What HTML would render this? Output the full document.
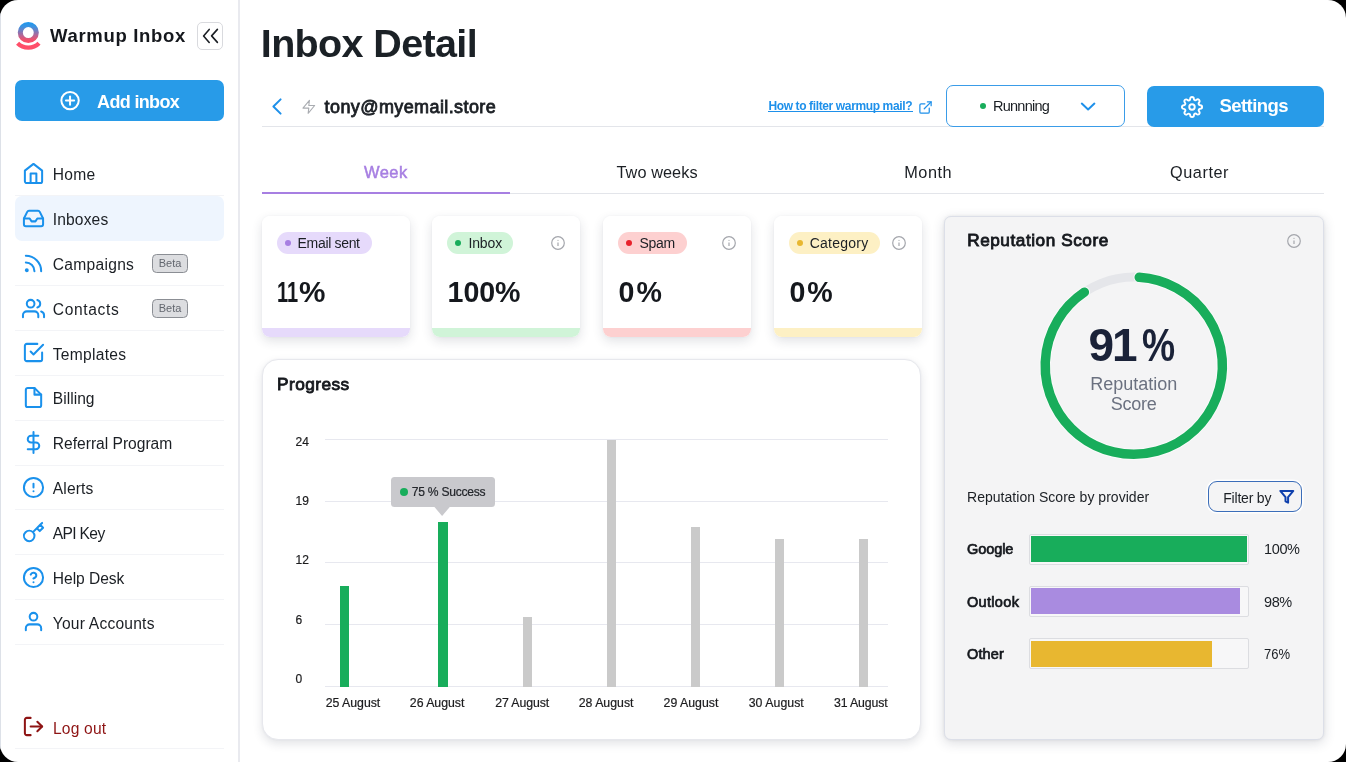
<!DOCTYPE html>
<html lang="en">
<head>
<meta charset="utf-8">
<title>Inbox Detail</title>
<style>
*{box-sizing:border-box;margin:0;padding:0}
html,body{width:1346px;height:762px;overflow:hidden;background:#000}
body{font-family:"Liberation Sans",sans-serif;color:#1b1f24}
#app{will-change:transform;position:absolute;left:0;top:0;width:1346px;height:762px;background:#fff;border-radius:18px;overflow:hidden}
.abs{position:absolute}
.t{position:absolute;white-space:nowrap;line-height:1}
svg{position:absolute;overflow:visible}
/* sidebar */
#edge{left:0;top:0;width:1.2px;height:762px;background:#dde1e8}
#side{left:0;top:0;width:240px;height:762px;border-right:2px solid #e9eaef}
.sep{position:absolute;left:15px;width:209px;height:1px;background:#f3f4f7}
.nav{font-size:16px;color:#1b1f24;left:52px}
.ic{stroke:#1a91ec;fill:none;stroke-width:2.1;stroke-linecap:round;stroke-linejoin:round}
.beta{position:absolute;left:152px;width:36px;height:19px;border:1.4px solid #8b8e94;border-radius:4.5px;background:#dcdde0;font-size:11px;color:#62666e;text-align:center;line-height:16.4px}
/* main */
.hr{position:absolute;height:1px;background:#e3e5ea}
.tab{font-size:16px;color:#1b1f24;letter-spacing:.3px}
.card{position:absolute;top:216px;width:148px;height:121px;background:#fff;border-radius:8px;overflow:hidden}
.cardsh{position:absolute;top:216px;width:148px;height:121px;border-radius:8px;box-shadow:0 4px 11px rgba(40,50,70,.14),0 0 2px rgba(40,50,70,.05)}
.band{position:absolute;left:0;bottom:0;width:100%;height:9.3px}
.pill{position:absolute;left:15px;top:16px;height:22px;border-radius:11px}
.pill i{position:absolute;left:7px;top:8px;width:6px;height:6px;border-radius:50%}
.pill span{position:absolute;left:20px;top:4px;font-size:14px;line-height:1;color:#1b1f24;white-space:nowrap}
.val{position:absolute;left:15px;top:62px;font-size:28px;font-weight:bold;line-height:1;color:#15181d;white-space:nowrap}
.info{stroke:#a4a6ac;fill:none;stroke-width:1.2}
</style>
</head>
<body>
<div id="app">

<!-- ============ SIDEBAR ============ -->
<div id="side" class="abs"></div>
<div id="edge" class="abs"></div>
<svg style="left:14px;top:18px" width="30" height="36" viewBox="14 18 30 36">
<defs><linearGradient id="lg" x1="0" y1="22" x2="0" y2="43" gradientUnits="userSpaceOnUse"><stop offset="0" stop-color="#1a98ee"/><stop offset=".22" stop-color="#3a93e2"/><stop offset=".55" stop-color="#9b6ea6"/><stop offset=".85" stop-color="#f2506c"/><stop offset="1" stop-color="#ff4d66"/></linearGradient></defs>
<circle cx="28.3" cy="32.55" r="8.0" fill="none" stroke="url(#lg)" stroke-width="5.1"/>
<path d="M17.6 43.2 A15.1 15.1 0 0 0 39.0 43.2" fill="none" stroke="#ff4f69" stroke-width="4.4"/>
</svg>
<div class="t" style="left:50.1px;top:26.8px;font-size:18.5px;font-weight:bold;color:#15181d;letter-spacing:0.67px;">Warmup Inbox</div>
<div class="abs" style="left:197px;top:22px;width:26px;height:28px;border:1px solid #d9dade;border-radius:5px;background:#fff"></div>
<svg style="left:197px;top:22px" width="26" height="28" viewBox="197 22 26 28" fill="none" stroke="#1b1f24" stroke-width="1.6" stroke-linecap="round" stroke-linejoin="round"><polyline points="209.2,29.4 203.6,35.9 209.2,42.4"/><polyline points="217.4,29.4 211.6,35.9 217.4,42.4"/></svg>
<div class="abs" style="left:15px;top:80px;width:209px;height:41px;border-radius:7px;background:#289be8"></div>
<svg style="left:59px;top:90px" width="22" height="22" viewBox="0 0 22 22" fill="none" stroke="#fff" stroke-width="2" stroke-linecap="round"><circle cx="11.05" cy="10.6" r="8.7"/><line x1="11.05" y1="6.5" x2="11.05" y2="14.7"/><line x1="6.95" y1="10.6" x2="15.15" y2="10.6"/></svg>
<div class="t" style="left:97.1px;top:92.5px;font-size:18px;font-weight:bold;color:#fff;letter-spacing:-0.66px;">Add inbox</div>
<div class="abs" style="left:15px;top:195.5px;width:209px;height:45px;border-radius:7px;background:#eef5fe"></div>
<svg class="ic" style="left:22.0px;top:161.9px;" width="23" height="23" viewBox="0 0 24 24"><path d="M3 9l9-7 9 7v11a2 2 0 0 1-2 2H5a2 2 0 0 1-2-2z"/><polyline points="9 22 9 12 15 12 15 22"/></svg>
<div class="t" style="left:52.8px;top:167.2px;font-size:15.6px;letter-spacing:0.30px;">Home</div>
<svg class="ic" style="left:22.0px;top:206.8px;" width="23" height="23" viewBox="0 0 24 24"><polyline points="22 12 16 12 14 15 10 15 8 12 2 12"/><path d="M5.45 5.11L2 12v6a2 2 0 0 0 2 2h16a2 2 0 0 0 2-2v-6l-3.45-6.89A2 2 0 0 0 16.76 4H7.24a2 2 0 0 0-1.79 1.11z"/></svg>
<div class="t" style="left:52.8px;top:212.0px;font-size:15.6px;letter-spacing:0.13px;">Inboxes</div>
<svg class="ic" style="left:22.0px;top:251.6px;" width="23" height="23" viewBox="0 0 24 24"><path d="M4 11a9 9 0 0 1 9 9"/><path d="M4 4a16 16 0 0 1 16 16"/><circle cx="5" cy="19" r="1"/></svg>
<div class="t" style="left:52.8px;top:256.9px;font-size:15.6px;letter-spacing:0.28px;">Campaigns</div>
<div class="beta" style="top:253.9px">Beta</div>
<div class="sep" style="top:285.1px"></div>
<svg class="ic" style="left:22.0px;top:296.5px;" width="23" height="23" viewBox="0 0 24 24"><path d="M17 21v-2a4 4 0 0 0-4-4H5a4 4 0 0 0-4 4v2"/><circle cx="9" cy="7" r="4"/><path d="M23 21v-2a4 4 0 0 0-3-3.87"/><path d="M16 3.13a4 4 0 0 1 0 7.75"/></svg>
<div class="t" style="left:52.8px;top:301.8px;font-size:15.6px;letter-spacing:0.62px;">Contacts</div>
<div class="beta" style="top:298.8px">Beta</div>
<div class="sep" style="top:330.0px"></div>
<svg class="ic" style="left:22.0px;top:341.3px;" width="23" height="23" viewBox="0 0 24 24"><polyline points="9 11 12 14 22 4"/><path d="M21 12v7a2 2 0 0 1-2 2H5a2 2 0 0 1-2-2V5a2 2 0 0 1 2-2h11"/></svg>
<div class="t" style="left:52.8px;top:346.6px;font-size:15.6px;letter-spacing:0.27px;">Templates</div>
<div class="sep" style="top:374.8px"></div>
<svg class="ic" style="left:22.0px;top:386.1px;" width="23" height="23" viewBox="0 0 24 24"><path d="M13 2H6a2 2 0 0 0-2 2v16a2 2 0 0 0 2 2h12a2 2 0 0 0 2-2V9z"/><polyline points="13 2 13 9 20 9"/></svg>
<div class="t" style="left:52.8px;top:391.4px;font-size:15.6px;letter-spacing:0.02px;">Billing</div>
<div class="sep" style="top:419.6px"></div>
<svg class="ic" style="left:22.0px;top:431.0px;" width="23" height="23" viewBox="0 0 24 24"><line x1="12" y1="1" x2="12" y2="23"/><path d="M17 5H9.5a3.5 3.5 0 0 0 0 7h5a3.5 3.5 0 0 1 0 7H6"/></svg>
<div class="t" style="left:52.8px;top:436.3px;font-size:15.6px;letter-spacing:-0.01px;">Referral Program</div>
<div class="sep" style="top:464.5px"></div>
<svg class="ic" style="left:22.0px;top:475.9px;" width="23" height="23" viewBox="0 0 24 24"><circle cx="12" cy="12" r="10"/><line x1="12" y1="8" x2="12" y2="12"/><line x1="12" y1="16" x2="12.01" y2="16"/></svg>
<div class="t" style="left:52.8px;top:481.2px;font-size:15.6px;letter-spacing:0.11px;">Alerts</div>
<div class="sep" style="top:509.4px"></div>
<svg class="ic" style="left:22.0px;top:520.7px;" width="23" height="23" viewBox="0 0 24 24"><path d="M21 2l-2 2m-7.61 7.61a5.5 5.5 0 1 1-7.778 7.778 5.5 5.5 0 0 1 7.777-7.777zm0 0L15.5 7.5m0 0l3 3L22 7l-3-3m-3.5 3.5L19 4"/></svg>
<div class="t" style="left:52.8px;top:526.0px;font-size:15.6px;letter-spacing:-0.66px;">API Key</div>
<div class="sep" style="top:554.2px"></div>
<svg class="ic" style="left:22.0px;top:565.6px;" width="23" height="23" viewBox="0 0 24 24"><circle cx="12" cy="12" r="10"/><path d="M9.09 9a3 3 0 0 1 5.83 1c0 2-3 3-3 3"/><line x1="12" y1="17" x2="12.01" y2="17"/></svg>
<div class="t" style="left:52.8px;top:570.9px;font-size:15.6px;letter-spacing:-0.05px;">Help Desk</div>
<div class="sep" style="top:599.1px"></div>
<svg class="ic" style="left:22.0px;top:610.4px;" width="23" height="23" viewBox="0 0 24 24"><path d="M20 21v-2a4 4 0 0 0-4-4H8a4 4 0 0 0-4 4v2"/><circle cx="12" cy="7" r="4"/></svg>
<div class="t" style="left:52.8px;top:615.7px;font-size:15.6px;letter-spacing:0.21px;">Your Accounts</div>
<div class="sep" style="top:643.9px"></div>
<div class="sep" style="top:195px"></div>
<svg class="ic" style="left:22.0px;top:715.3px;stroke:#8e1414" width="23" height="23" viewBox="0 0 24 24"><path d="M9 21H5a2 2 0 0 1-2-2V5a2 2 0 0 1 2-2h4"/><polyline points="16 17 21 12 16 7"/><line x1="21" y1="12" x2="9" y2="12"/></svg>
<div class="t" style="left:52.9px;top:720.6px;font-size:15.6px;color:#8e1414;letter-spacing:0.21px;">Log out</div>
<div class="sep" style="top:748px"></div>

<!-- ============ MAIN ============ -->
<div class="t" style="left:260.8px;top:23.8px;font-size:39.5px;font-weight:bold;color:#1b2126;letter-spacing:-0.64px;">Inbox Detail</div>
<svg style="left:268px;top:94px" width="20" height="24" viewBox="268 94 20 24" fill="none" stroke="#1e90ea" stroke-width="2" stroke-linecap="round" stroke-linejoin="round"><polyline points="280.6,99.4 273.4,106.5 280.6,113.6"/></svg>
<svg style="left:301.3px;top:98.7px" width="15.6" height="15.6" viewBox="0 0 24 24" fill="none" stroke="#a9acb1" stroke-width="1.7" stroke-linejoin="round"><polygon points="13 2 3 14 12 14 11 22 21 10 12 10 13 2"/></svg>
<div class="t" style="left:324.6px;top:97.6px;font-size:18px;letter-spacing:0.40px;-webkit-text-stroke:.8px #1b1f24;">tony@myemail.store</div>
<div class="hr" style="left:262px;top:125.5px;width:1062px"></div>
<div class="t" style="left:768.4px;top:100.0px;font-size:12px;font-weight:bold;color:#1e90ea;letter-spacing:-0.37px;">How to filter warmup mail?</div>
<div class="abs" style="left:768px;top:111.3px;width:145px;height:1px;background:#1e90ea"></div>
<svg style="left:917.5px;top:99.5px" width="15" height="15" viewBox="0 0 24 24" fill="none" stroke="#1e90ea" stroke-width="2" stroke-linecap="round" stroke-linejoin="round"><path d="M18 13v6a2 2 0 0 1-2 2H5a2 2 0 0 1-2-2V8a2 2 0 0 1 2-2h6"/><polyline points="15 3 21 3 21 9"/><line x1="10" y1="14" x2="21" y2="3"/></svg>
<div class="abs" style="left:946px;top:85px;width:178.5px;height:42px;border:1.5px solid #3a9ce8;border-radius:7px;background:#fff"></div>
<div class="abs" style="left:980.1px;top:103.0px;width:6px;height:6px;border-radius:50%;background:#18ad5b"></div>
<div class="t" style="left:993.0px;top:99.3px;font-size:14.5px;letter-spacing:-0.75px;">Runnning</div>
<svg style="left:1076px;top:98px" width="24" height="16" viewBox="1076 98 24 16" fill="none" stroke="#1e90ea" stroke-width="2" stroke-linecap="round" stroke-linejoin="round"><polyline points="1081.8,103.6 1088.1,109.4 1094.4,103.6"/></svg>
<div class="abs" style="left:1146.5px;top:85.5px;width:177px;height:41px;border-radius:7px;background:#289be8"></div>
<svg style="left:1181px;top:95.6px" width="22" height="22" viewBox="0 0 24 24" fill="none" stroke="#fff" stroke-width="2.1" stroke-linecap="round" stroke-linejoin="round"><circle cx="12" cy="12" r="3"/><path d="M19.4 15a1.65 1.65 0 0 0 .33 1.82l.06.06a2 2 0 0 1 0 2.83 2 2 0 0 1-2.83 0l-.06-.06a1.65 1.65 0 0 0-1.82-.33 1.65 1.65 0 0 0-1 1.51V21a2 2 0 0 1-2 2 2 2 0 0 1-2-2v-.09A1.65 1.65 0 0 0 9 19.4a1.65 1.65 0 0 0-1.82.33l-.06.06a2 2 0 0 1-2.83 0 2 2 0 0 1 0-2.83l.06-.06a1.65 1.65 0 0 0 .33-1.82 1.65 1.65 0 0 0-1.51-1H3a2 2 0 0 1-2-2 2 2 0 0 1 2-2h.09A1.65 1.65 0 0 0 4.6 9a1.65 1.65 0 0 0-.33-1.82l-.06-.06a2 2 0 0 1 0-2.83 2 2 0 0 1 2.83 0l.06.06a1.65 1.65 0 0 0 1.82.33H9a1.65 1.65 0 0 0 1-1.51V3a2 2 0 0 1 2-2 2 2 0 0 1 2 2v.09a1.65 1.65 0 0 0 1 1.51 1.65 1.65 0 0 0 1.82-.33l.06-.06a2 2 0 0 1 2.83 0 2 2 0 0 1 0 2.83l-.06.06a1.65 1.65 0 0 0-.33 1.82V9a1.65 1.65 0 0 0 1.51 1H21a2 2 0 0 1 2 2 2 2 0 0 1-2 2h-.09a1.65 1.65 0 0 0-1.51 1z"/></svg>
<div class="t" style="left:1219.5px;top:97.2px;font-size:18.5px;font-weight:bold;color:#fff;letter-spacing:-0.58px;">Settings</div>
<div class="hr" style="left:262px;top:192.6px;width:1062px"></div>
<div class="abs" style="left:262px;top:192.0px;width:248.2px;height:1.8px;background:#a77fe2"></div>
<div class="t" style="left:364.0px;top:164.3px;font-size:16.5px;color:#a77fe2;letter-spacing:0.44px;-webkit-text-stroke:.5px #a77fe2;">Week</div>
<div class="t" style="left:616.5px;top:164.2px;font-size:16.3px;letter-spacing:0.07px;">Two weeks</div>
<div class="t" style="left:904.3px;top:164.3px;font-size:16.3px;letter-spacing:0.51px;">Month</div>
<div class="t" style="left:1170.0px;top:164.3px;font-size:16.3px;letter-spacing:0.55px;">Quarter</div>

<div class="cardsh" style="left:261.8px"></div>
<div class="card" style="left:261.8px"><div class="band" style="background:#e6dafb"></div></div>
<div class="abs" style="left:276.9px;top:231.5px;width:94.8px;height:22.2px;border-radius:11.1px;background:#e6dafb"></div>
<div class="abs" style="left:284.6px;top:239.6px;width:6.2px;height:6.2px;border-radius:50%;background:#a77fe2"></div>
<div class="t" style="left:297.6px;top:236.3px;font-size:14px;letter-spacing:-0.33px;">Email sent</div>
<div class="t" style="left:277.0px;top:277.6px;font-size:28.6px;font-weight:bold;color:#15181d;transform:scaleX(.7);transform-origin:0 50%;">11</div>
<div class="t" style="left:299.0px;top:277.6px;font-size:28.6px;font-weight:bold;color:#15181d;transform:scaleX(1.04);transform-origin:0 50%;">%</div>
<div class="cardsh" style="left:432.2px"></div>
<div class="card" style="left:432.2px"><div class="band" style="background:#d0f4d8"></div></div>
<div class="abs" style="left:447.3px;top:231.5px;width:66.1px;height:22.2px;border-radius:11.1px;background:#d0f4d8"></div>
<div class="abs" style="left:455.0px;top:239.6px;width:6.2px;height:6.2px;border-radius:50%;background:#18ad5b"></div>
<div class="t" style="left:468.4px;top:236.3px;font-size:14px;letter-spacing:-0.11px;">Inbox</div>
<div class="t" style="left:447.6px;top:277.6px;font-size:28.6px;font-weight:bold;color:#15181d;letter-spacing:-0.11px;">100%</div>
<svg class="info" style="left:550.4px;top:234.7px" width="16" height="16" viewBox="-8 -8 16 16"><circle cx="0" cy="0" r="6.3"/><line x1="0" y1="-0.6" x2="0" y2="3.1"/><circle cx="0" cy="-2.6" r=".55" fill="#a9abb0" stroke="none"/></svg>
<div class="cardsh" style="left:603.0px"></div>
<div class="card" style="left:603.0px"><div class="band" style="background:#fdd0d0"></div></div>
<div class="abs" style="left:618.1px;top:231.5px;width:68.6px;height:22.2px;border-radius:11.1px;background:#fdd0d0"></div>
<div class="abs" style="left:625.8px;top:239.6px;width:6.2px;height:6.2px;border-radius:50%;background:#e8222c"></div>
<div class="t" style="left:639.4px;top:236.3px;font-size:14px;letter-spacing:-0.23px;">Spam</div>
<div class="t" style="left:618.6px;top:277.6px;font-size:28.6px;font-weight:bold;color:#15181d;letter-spacing:2.07px;">0%</div>
<svg class="info" style="left:720.8px;top:234.7px" width="16" height="16" viewBox="-8 -8 16 16"><circle cx="0" cy="0" r="6.3"/><line x1="0" y1="-0.6" x2="0" y2="3.1"/><circle cx="0" cy="-2.6" r=".55" fill="#a9abb0" stroke="none"/></svg>
<div class="cardsh" style="left:773.7px"></div>
<div class="card" style="left:773.7px"><div class="band" style="background:#fdf0c4"></div></div>
<div class="abs" style="left:788.8px;top:231.5px;width:91.1px;height:22.2px;border-radius:11.1px;background:#fdf0c4"></div>
<div class="abs" style="left:796.5px;top:239.6px;width:6.2px;height:6.2px;border-radius:50%;background:#e8b730"></div>
<div class="t" style="left:809.7px;top:236.3px;font-size:14px;letter-spacing:0.24px;">Category</div>
<div class="t" style="left:789.4px;top:277.6px;font-size:28.6px;font-weight:bold;color:#15181d;letter-spacing:1.87px;">0%</div>
<svg class="info" style="left:891.4px;top:234.7px" width="16" height="16" viewBox="-8 -8 16 16"><circle cx="0" cy="0" r="6.3"/><line x1="0" y1="-0.6" x2="0" y2="3.1"/><circle cx="0" cy="-2.6" r=".55" fill="#a9abb0" stroke="none"/></svg>

<div class="abs" style="left:262px;top:359px;width:659px;height:380.5px;border-radius:16px;background:#fff;border:1px solid #e7e8ed;box-shadow:0 4px 10px rgba(40,50,70,.13),0 0 2px rgba(40,50,70,.05)"></div>
<div class="t" style="left:277.0px;top:376.4px;font-size:17.3px;color:#15181d;letter-spacing:0.43px;-webkit-text-stroke:.85px #15181d;">Progress</div>
<div class="abs" style="left:325px;top:438.8px;width:563px;height:1px;background:#e7e8ef"></div>
<div class="abs" style="left:325px;top:500.6px;width:563px;height:1px;background:#e7e8ef"></div>
<div class="abs" style="left:325px;top:562.3px;width:563px;height:1px;background:#e7e8ef"></div>
<div class="abs" style="left:325px;top:624.1px;width:563px;height:1px;background:#e7e8ef"></div>
<div class="abs" style="left:325px;top:685.8px;width:563px;height:1px;background:#e7e8ef"></div>
<div class="t" style="left:295.5px;top:435.5px;font-size:12px;color:#1c1c1e;-webkit-text-stroke:.2px #1c1c1e;">24</div>
<div class="t" style="left:295.5px;top:495.0px;font-size:12px;color:#1c1c1e;-webkit-text-stroke:.2px #1c1c1e;">19</div>
<div class="t" style="left:295.5px;top:554.2px;font-size:12px;color:#1c1c1e;-webkit-text-stroke:.2px #1c1c1e;">12</div>
<div class="t" style="left:295.5px;top:613.7px;font-size:12px;color:#1c1c1e;-webkit-text-stroke:.2px #1c1c1e;">6</div>
<div class="t" style="left:295.5px;top:673.0px;font-size:12px;color:#1c1c1e;-webkit-text-stroke:.2px #1c1c1e;">0</div>
<div class="abs" style="left:339.8px;top:585.8px;width:9.6px;height:100.8px;background:#18ad5b"></div>
<div class="abs" style="left:438.2px;top:522.2px;width:9.6px;height:164.4px;background:#18ad5b"></div>
<div class="abs" style="left:522.7px;top:616.7px;width:8.9px;height:69.9px;background:#cacaca"></div>
<div class="abs" style="left:607.1px;top:439.5px;width:8.9px;height:247.1px;background:#cacaca"></div>
<div class="abs" style="left:690.8px;top:526.9px;width:8.9px;height:159.7px;background:#cacaca"></div>
<div class="abs" style="left:774.8px;top:539.0px;width:8.9px;height:147.6px;background:#cacaca"></div>
<div class="abs" style="left:859.1px;top:539.0px;width:8.9px;height:147.6px;background:#cacaca"></div>
<div class="t" style="left:325.8px;top:697.2px;font-size:12.3px;color:#1c1c1e;letter-spacing:-0.03px;-webkit-text-stroke:.2px #1c1c1e;">25 August</div>
<div class="t" style="left:409.8px;top:697.2px;font-size:12.3px;color:#1c1c1e;letter-spacing:-0.01px;-webkit-text-stroke:.2px #1c1c1e;">26 August</div>
<div class="t" style="left:495.2px;top:697.2px;font-size:12.3px;color:#1c1c1e;letter-spacing:-0.08px;-webkit-text-stroke:.2px #1c1c1e;">27 August</div>
<div class="t" style="left:578.7px;top:697.2px;font-size:12.3px;color:#1c1c1e;letter-spacing:0.01px;-webkit-text-stroke:.2px #1c1c1e;">28 August</div>
<div class="t" style="left:663.6px;top:697.2px;font-size:12.3px;color:#1c1c1e;letter-spacing:0.01px;-webkit-text-stroke:.2px #1c1c1e;">29 August</div>
<div class="t" style="left:748.7px;top:697.2px;font-size:12.3px;color:#1c1c1e;letter-spacing:0.05px;-webkit-text-stroke:.2px #1c1c1e;">30 August</div>
<div class="t" style="left:834.1px;top:697.2px;font-size:12.3px;color:#1c1c1e;letter-spacing:-0.15px;-webkit-text-stroke:.2px #1c1c1e;">31 August</div>
<div class="abs" style="left:391px;top:477.3px;width:104px;height:29.6px;border-radius:3.5px;background:#c9c9cd"></div>
<svg style="left:430px;top:506px" width="24" height="12" viewBox="430 506 24 12"><polygon points="434,506.5 450.2,506.5 442.1,515.9" fill="#c9c9cd"/></svg>
<div class="abs" style="left:399.7px;top:488.0px;width:8.1px;height:8.1px;border-radius:50%;background:#18ad5b"></div>
<div class="t" style="left:411.8px;top:486.1px;font-size:12.1px;color:#23262b;letter-spacing:-0.26px;-webkit-text-stroke:.2px #23262b;">75 % Success</div>

<div class="abs" style="left:944.1px;top:216.1px;width:379.7px;height:524px;border-radius:7px;background:#f4f4f5;border:1.6px solid #dcdfe8;box-shadow:0 3px 12px rgba(40,50,70,.17),0 0 3px rgba(40,50,70,.08)"></div>
<div class="t" style="left:967.2px;top:232.4px;font-size:17.2px;color:#15181d;letter-spacing:0.55px;-webkit-text-stroke:.85px #15181d;">Reputation Score</div>
<svg class="info" style="left:1285.6px;top:232.8px" width="16" height="16" viewBox="-8 -8 16 16"><circle cx="0" cy="0" r="6.3"/><line x1="0" y1="-0.6" x2="0" y2="3.1"/><circle cx="0" cy="-2.6" r=".55" fill="#a9abb0" stroke="none"/></svg>
<svg style="left:1030px;top:262px" width="208" height="208" viewBox="1030 262 208 208" fill="none"><circle cx="1133.8" cy="365.7" r="88.6" stroke="#e5e6ea" stroke-width="9.0"/><path d="M1139.21 277.27 A88.6 88.6 0 1 1 1084.38 292.16" stroke="#fbfbfb" stroke-width="11.3" stroke-linecap="round"/><path d="M1139.21 277.27 A88.6 88.6 0 1 1 1084.38 292.16" stroke="#18ad5b" stroke-width="9.5" stroke-linecap="round"/></svg>
<div class="t" style="left:1088.6px;top:322.0px;font-size:46px;font-weight:bold;color:#1a2238;letter-spacing:-2.17px;">91</div>
<div class="t" style="left:1141.6px;top:322.0px;font-size:46px;font-weight:bold;color:#1a2238;transform:scaleX(.81);transform-origin:0 50%;">%</div>
<div class="t" style="left:1090.2px;top:374.8px;font-size:18px;color:#6b7180;">Reputation</div>
<div class="t" style="left:1110.7px;top:395.3px;font-size:18px;color:#6b7180;letter-spacing:-0.23px;">Score</div>
<div class="t" style="left:967.0px;top:490.0px;font-size:14px;letter-spacing:0.03px;">Reputation Score by provider</div>
<div class="abs" style="left:1208px;top:481.2px;width:93.7px;height:31.2px;border:1.7px solid #3b6db9;border-radius:9px;box-shadow:0 0 0 1.6px rgba(255,255,255,.85)"></div>
<div class="t" style="left:1223.2px;top:490.5px;font-size:14px;letter-spacing:-0.19px;">Filter by</div>
<svg style="left:1279.4px;top:489.2px" width="15.6" height="15.6" viewBox="0 0 24 24" fill="none" stroke="#0f40ad" stroke-width="3.1" stroke-linejoin="round"><polygon points="22 3 2 3 10 12.46 10 19 14 21 14 12.46 22 3"/></svg>
<div class="t" style="left:967.0px;top:542.4px;font-size:14.5px;color:#15181d;letter-spacing:-0.07px;-webkit-text-stroke:.7px #15181d;">Google</div>
<div class="abs" style="left:1028.6px;top:534.1px;width:220.7px;height:31.2px;border:1px solid #dcdde1;border-radius:2px;background:#f7f7f8"></div>
<div class="abs" style="left:1031px;top:536.4px;width:216.0px;height:26px;background:#18ad5b"></div>
<div class="t" style="left:1264.1px;top:542.4px;font-size:14.5px;letter-spacing:-0.40px;">100%</div>
<div class="t" style="left:967.0px;top:595.0px;font-size:14.5px;color:#15181d;letter-spacing:0.32px;-webkit-text-stroke:.7px #15181d;">Outlook</div>
<div class="abs" style="left:1028.6px;top:586.1px;width:220.7px;height:31.2px;border:1px solid #dcdde1;border-radius:2px;background:#f7f7f8"></div>
<div class="abs" style="left:1031px;top:588.4px;width:209.3px;height:26px;background:#a98be0"></div>
<div class="t" style="left:1264.1px;top:595.0px;font-size:14.5px;letter-spacing:-0.47px;">98%</div>
<div class="t" style="left:967.0px;top:647.2px;font-size:14.5px;color:#15181d;letter-spacing:0.11px;-webkit-text-stroke:.7px #15181d;">Other</div>
<div class="abs" style="left:1028.6px;top:638.3px;width:220.7px;height:31.2px;border:1px solid #dcdde1;border-radius:2px;background:#f7f7f8"></div>
<div class="abs" style="left:1031px;top:640.6px;width:181.3px;height:26px;background:#e8b730"></div>
<div class="t" style="left:1264.1px;top:647.2px;font-size:14.5px;transform:scaleX(0.899);transform-origin:0 50%;">76%</div>

</div>
</body>
</html>
